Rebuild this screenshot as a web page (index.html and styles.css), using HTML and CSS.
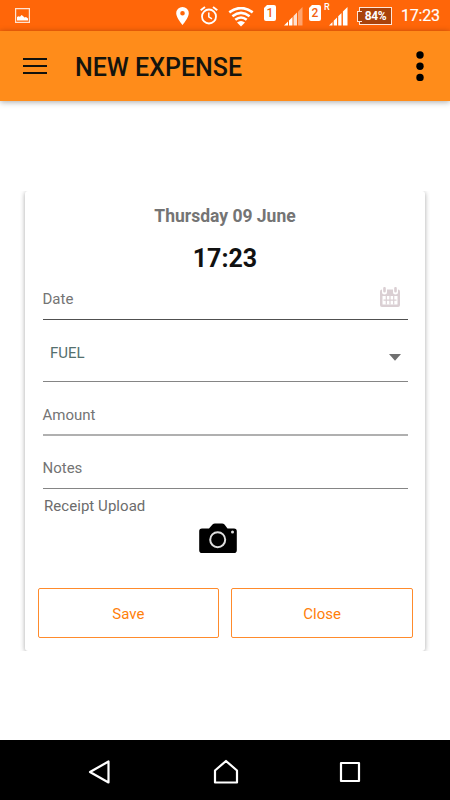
FILE: index.html
```html
<!DOCTYPE html>
<html lang="en">
<head>
<meta charset="utf-8">
<title>New expense</title>
<link rel="stylesheet" href="styles.css">
</head>
<body>
<div class="screen">
  <div class="status">
    <svg class="picture" width="15" height="15" viewBox="0 0 15 15"><path d="M.6.6h13.800v13.800H.6z" fill="none" stroke="#ffe3d2" stroke-width="1.200"/><path d="M2 12.500V9l1.500-.7 1.500.5L6.500 7 8 8l1.500 1.500L11 9l2 1.500v2z" fill="#fff"/></svg>
    <svg class="pin" width="13" height="18" viewBox="0 0 13 18"><path fill="#fff" fill-rule="evenodd" d="M6.500 0A6.300 6.300 0 0 0 .2 6.300C.2 11 6.500 18 6.500 18s6.300-7 6.300-11.700A6.300 6.300 0 0 0 6.500 0zm0 4a2.300 2.300 0 1 1 0 4.600 2.300 2.300 0 0 1 0-4.600z"/></svg>
    <svg class="alarm" width="18" height="19" viewBox="0 0 18 19" fill="none" stroke="#fff"><circle cx="9" cy="10.500" r="7" stroke-width="1.800"/><path d="M8.800 6.500v4.300l3.200 2" stroke-width="1.500"/><path d="M.7 4.300 5 .9M17.300 4.300 13 .9" stroke-width="1.900"/></svg>
    <svg class="wifi" width="26" height="20" viewBox="0 0 26 20" fill="none" stroke="#fff" stroke-width="2.600"><path d="M1.300 5.400Q13-3.300 24.700 5.400M4.400 9.300Q13 2.600 21.600 9.300M7.300 12.800Q13 8.200 18.700 12.800"/><path d="M9 15.500Q13 12.300 17 15.500L13 19.500z" fill="#fff" stroke="none"/></svg>
    <span class="sim sim-one">1</span>
    <svg class="signal" width="19" height="19" viewBox="0 0 19 19"><path d="M0 18.500 4 14.500v4zM5 13.500l3.500-3.500v8.500H5z" fill="#fff"/><path d="M9.500 9 13 5.500v13H9.500z" fill="#ffe0ce"/><path d="M14 4.500 18.500 0v18.500H14z" fill="#ffa36d"/></svg>
    <span class="sim sim-two">2</span>
    <span class="roaming">R</span>
    <svg class="signal-full" width="19" height="19" viewBox="0 0 19 19"><path d="M0 18.500 3.500 15v3.500zM4.700 13.800l3.300-3.300v8H4.700zM9.200 9.300 12.500 6v12.500H9.200zM13.900 4.600 18.500 0v18.500h-4.600z" fill="#fff"/></svg>
    <span class="battery">84%</span>
    <span class="clock">17:23</span>
  </div>
  <header class="appbar">
    <svg class="menu" width="24" height="18" viewBox="0 0 24 18"><path d="M0 2h24M0 9h24M0 16h24" stroke="#12110d" stroke-width="2"/></svg>
    <h1>NEW EXPENSE</h1>
    <svg class="more" width="8" height="30" viewBox="0 0 8 30"><circle cx="4" cy="4" r="3.700"/><circle cx="4" cy="15.200" r="3.700"/><circle cx="4" cy="26.400" r="3.700"/></svg>
  </header>
  <main>
    <section class="card">
      <h2>Thursday 09 June</h2>
      <div class="time">17:23</div>
      <div class="field date"><span>Date</span>
        <svg width="20" height="20" viewBox="0 0 20 20"><rect y="2.500" width="20" height="17.500" rx="2" fill="#dacfd3"/><path d="M4.500 0v5M15.500 0v5" stroke="#fff" stroke-width="5" stroke-linecap="round"/><path d="M4.500 1.200v3M15.500 1.200v3" stroke="#dacfd3" stroke-width="2.600" stroke-linecap="round"/><path d="M2.500 9h15v8.500h-15z" fill="#fff"/><path d="M6.300 9v8.500M10 9v8.500M13.700 9v8.500M3.500 13.200h13" stroke="#dacfd3" stroke-width="1.200"/></svg>
      </div>
      <div class="field select"><span>FUEL</span><svg width="12" height="7" viewBox="0 0 12 7"><path d="M0 0h12L6 6.800z" fill="#707070"/></svg></div>
      <div class="field amount"><span>Amount</span></div>
      <div class="field notes"><span>Notes</span></div>
      <div class="upload">Receipt Upload</div>
      <svg class="camera" width="38" height="31" viewBox="0 0 38 31"><path d="M3 5.500h7L13.500 1.500Q14.500.5 16 .5h7q1.500 0 2.500 1L28.500 5.500H35q2.800 0 2.800 2.800v18.900q0 2.800-2.800 2.800H3Q.2 30 .2 27.200V8.300Q.2 5.500 3 5.500z" fill="#000"/><circle cx="18.700" cy="16.700" r="7.500" fill="none" stroke="#dedede" stroke-width="2"/><circle cx="33.500" cy="9" r="1.500" fill="#ddd"/></svg>
      <div class="actions"><button>Save</button><button>Close</button></div>
    </section>
  </main>
  <nav class="navbar">
    <svg width="24" height="26" viewBox="0 0 24 26"><path d="M2 13 20.500 2.500v21z"/></svg>
    <svg width="26" height="26" viewBox="0 0 26 26"><path d="M2 11.500 13 2l11 9.500v12H2z"/></svg>
    <svg width="22" height="22" viewBox="0 0 22 22"><path d="M2 2h18v18H2z"/></svg>
  </nav>
</div>
</body>
</html>
```
FILE: styles.css
```css
* { box-sizing: border-box; }
body { margin: 0; background: #fff; font-family: Roboto, sans-serif; }
svg { display: block; flex: none; }
.screen { width: 450px; height: 800px; display: flex; flex-direction: column; overflow: hidden; }

.status { height: 31px; flex: none; display: flex; align-items: flex-start; background: #ff6609; color: #fff; }
.picture { margin: 8px 0 0 15px; }
.pin { margin: 7px 0 0 146px; }
.alarm { margin: 6px 0 0 11px; }
.wifi { margin: 7px 0 0 10px; }
.sim {
  width: 12px; height: 16px; margin-top: 5px; flex: none;
  background: #fff; color: #f26010; border-radius: 2px;
  clip-path: polygon(3px 0, 100% 0, 100% 100%, 0 100%, 0 3px);
  font: 500 12px/17px Roboto, sans-serif; text-align: center;
}
.sim-one { margin-left: 10px; }
.signal { margin: 7px 0 0 8px; }
.sim-two { margin-left: 6px; }
.roaming { width: 6px; margin: 2px 0 0 3px; font-size: 9px; line-height: 11px; font-weight: 500; }
.signal-full { margin: 7px 0 0 -1px; }
.battery {
  position: relative; width: 33px; height: 18px; margin: 7px 0 0 11px; flex: none;
  border: 1px solid #ffe7da; background: #a9430b;
  font-size: 12px; line-height: 16px; font-weight: 700; text-align: center; letter-spacing: -.3px;
}
.battery::before { content: ""; position: absolute; left: -3px; top: 3px; width: 4px; height: 9px; background: #a9430b; border: 1px solid #ffe7da; border-right: 0; }
.clock { margin: 6px 0 0 9px; font-size: 16px; line-height: 20px; letter-spacing: -.2px; -webkit-text-stroke: .2px #fff; }

.appbar { height: 70px; flex: none; display: flex; align-items: center; background: #ff8c1a; box-shadow: 0 1px 6px rgba(0,0,0,.35); }
.menu { margin-left: 23px; }
h1 { margin: 4px 0 0 28px; font-size: 25px; line-height: 30px; font-weight: 500; color: #14140e; white-space: nowrap; }
.more { margin: 0 26px 0 auto; }

main { flex: 1; padding: 90px 25px 0; }
.card {
  height: 460px; padding: 15px 13px 0; border-radius: 3px; background: #fff;
  box-shadow: 0 1px 5px rgba(0,0,0,.35); clip-path: inset(0 -5px);
  display: flex; flex-direction: column;
}
h2 { margin: 0; font-size: 17.500px; line-height: 20px; font-weight: 700; color: #747474; text-align: center; }
.time { margin-top: 19px; font-size: 25px; line-height: 27px; font-weight: 700; color: #111; text-align: center; }
.field { margin: 0 4.500px; display: flex; justify-content: space-between; font-size: 15px; line-height: 18px; color: #747474; border-bottom: 1px solid #505050; }
.date { height: 48px; padding-top: 18px; }
.date svg { margin: -3px 7.500px 0 0; }
.select { height: 62px; padding: 24px 6.500px 0 7.500px; color: #54706e; border-color: #858585; }
.select svg { margin-top: 10px; }
.amount { height: 54px; padding-top: 24px; border-bottom: 2px solid #b0b0b0; }
.notes { height: 53px; padding-top: 23px; border-color: #858585; }
.upload { margin: 7px 6px 0; font-size: 15px; line-height: 20px; color: #6c6c6c; letter-spacing: .05px; }
.camera { margin: 7px 0 0 161px; }
.actions { display: flex; gap: 12px; margin: 34px -1px 0 -.5px; }
button { width: 182px; height: 50px; padding: 1px 0 0; border: 1px solid #ff8b2c; border-radius: 2px; background: #fff; color: #ff800a; font: 15px/20px Roboto, sans-serif; }

.navbar { height: 60px; flex: none; padding: 4px 89px 0 88px; display: flex; justify-content: space-between; align-items: center; background: #000; }
.navbar path { fill: none; stroke: #fff; stroke-width: 2.200; stroke-linejoin: round; }
```
